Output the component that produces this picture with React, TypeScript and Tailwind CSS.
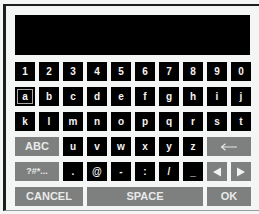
import React from 'react';

type Key = { label: React.ReactNode; span?: number; kind?: 'dark' | 'gray' | 'sel'; small?: boolean };

const rows: Key[][] = [
  ['1', '2', '3', '4', '5', '6', '7', '8', '9', '0'].map((c) => ({ label: c })),
  [
    { label: 'a', kind: 'sel' },
    ...['b', 'c', 'd', 'e', 'f', 'g', 'h', 'i', 'j'].map((c) => ({ label: c })),
  ],
  ['k', 'l', 'm', 'n', 'o', 'p', 'q', 'r', 's', 't'].map((c) => ({ label: c })),
  [
    { label: 'ABC', span: 2, kind: 'gray' },
    ...['u', 'v', 'w', 'x', 'y', 'z'].map((c) => ({ label: c })),
    {
      label: (
        <svg width="18" height="8" viewBox="0 0 18 8">
          <path d="M17 4H2M5.5 0.8L1.5 4l4 3.2" stroke="#e6e6e6" strokeWidth="1.1" fill="none" />
        </svg>
      ),
      span: 2,
      kind: 'gray',
    },
  ],
  [
    { label: '?#*...', span: 2, kind: 'gray', small: true },
    ...['.', '@', '-', ':', '/', '_'].map((c) => ({ label: c })),
    {
      label: (
        <svg width="10" height="10" viewBox="0 0 10 10">
          <path d="M1 5L9 0.5V9.5Z" fill="#f2f2f2" />
        </svg>
      ),
      kind: 'gray',
    },
    {
      label: (
        <svg width="10" height="10" viewBox="0 0 10 10">
          <path d="M9 5L1 0.5V9.5Z" fill="#f2f2f2" />
        </svg>
      ),
      kind: 'gray',
    },
  ],
  [
    { label: 'CANCEL', span: 3, kind: 'gray' },
    { label: 'SPACE', span: 5, kind: 'gray' },
    { label: 'OK', span: 2, kind: 'gray' },
  ],
];

const spanClass: Record<number, string> = {
  1: 'col-span-1',
  2: 'col-span-2',
  3: 'col-span-3',
  5: 'col-span-5',
};

export default function App() {
  return (
    <div
      className="w-[259px] h-[214px] bg-[#f4f6f5] pl-[3px] pt-[4px] overflow-hidden"
      style={{ fontFamily: '"Liberation Sans", Arial, sans-serif' }}
    >
      <div className="h-[207px] border-l-[3px] border-t-[2px] border-[#1e1e1e] border-b border-b-[#9a9c9b] pl-[9px] pt-[9px]">
        <div className="w-[235px] h-[40px] bg-black" />
        <div className="mt-[7px] w-[236px] grid grid-cols-10 gap-x-[4px] gap-y-[6px]">
          {rows.flat().map((k, i) => (
            <div
              key={i}
              className={`${spanClass[k.span ?? 1]} h-[19px] flex items-center justify-center font-bold leading-none ${
                k.kind === 'gray'
                  ? `bg-[#7d807f] text-[#e9eaea] ${k.small ? 'text-[9px]' : 'text-[11px]'}`
                  : 'bg-black text-[#f4f4f4] text-[10px]'
              }`}
            >
              {k.kind === 'sel' ? (
                <div className="w-[16px] h-[15px] border border-[#a8a8a8] flex items-center justify-center">
                  {k.label}
                </div>
              ) : (
                k.label
              )}
            </div>
          ))}
        </div>
      </div>
    </div>
  );
}
